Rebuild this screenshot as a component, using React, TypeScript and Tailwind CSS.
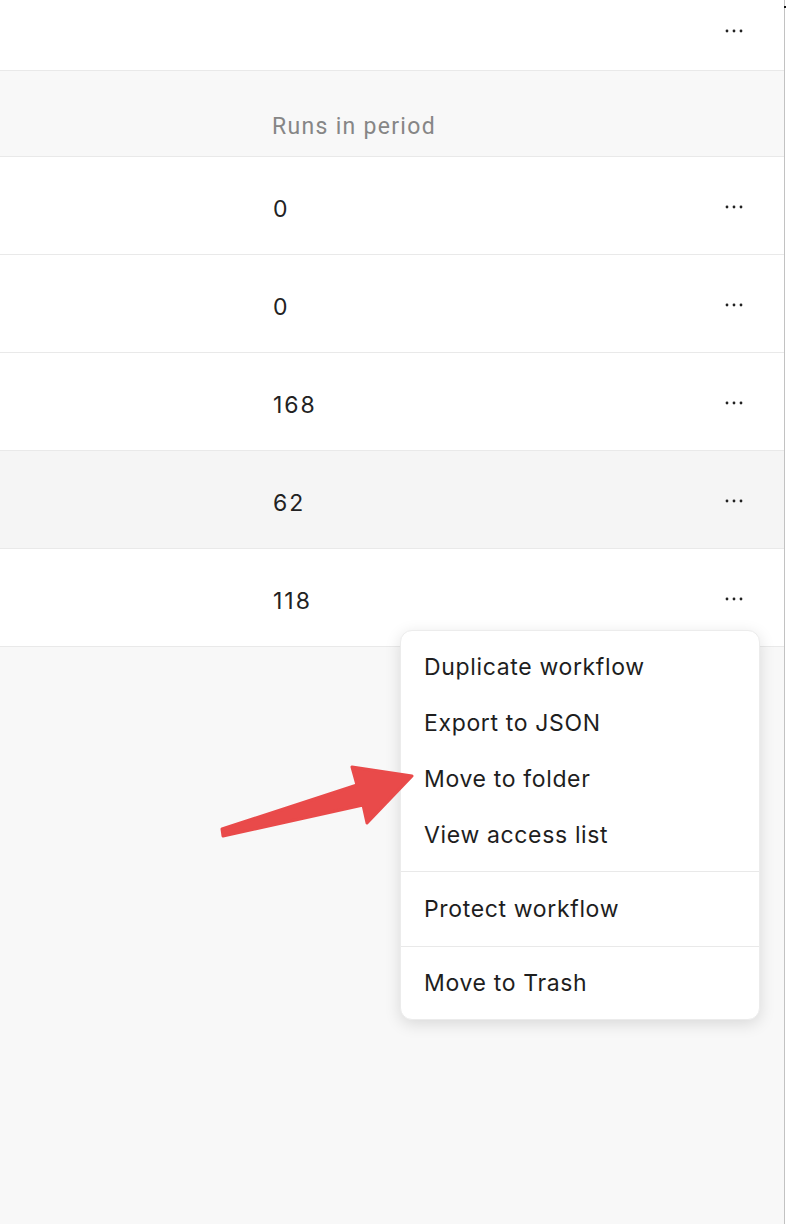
import React from "react";

const rows = [
  { runs: "0", hover: false },
  { runs: "0", hover: false },
  { runs: "168", hover: false },
  { runs: "62", hover: true },
  { runs: "118", hover: false },
];

const menuGroups = [
  { items: ["Duplicate workflow", "Export to JSON", "Move to folder", "View access list"], pad: "py-2" },
  { items: ["Protect workflow"], pad: "py-[9px]" },
  { items: ["Move to Trash"], pad: "py-2" },
];

function Dots() {
  return (
    <svg width="20" height="4" viewBox="0 0 20 4" className="block">
      <circle cx="3" cy="2" r="1.4" fill="#222" />
      <circle cx="10" cy="2" r="1.4" fill="#222" />
      <circle cx="17" cy="2" r="1.4" fill="#222" />
    </svg>
  );
}

export default function App() {
  return (
    <div className="relative flex w-[786px] h-[1224px] bg-white overflow-hidden">
      <div className="w-[784px] h-full bg-[#f8f8f8] flex flex-col">
        <div className="h-[71px] bg-white border-b border-[#e9e9e9] flex items-center justify-end pr-[40px] pb-[9px]">
          <Dots />
        </div>
        <div className="h-[86px] border-b border-[#e9e9e9] pl-[272px] pt-[41px]">
          <span className="text-[23px] leading-[30px] tracking-[1.3px] text-[#868686]" style={{ fontFamily: "Roboto, sans-serif" }}>
            Runs in period
          </span>
        </div>
        {rows.map((r, i) => (
          <div
            key={i}
            className={`h-[98px] border-b border-[#e9e9e9] flex items-center pl-[273px] pr-[40px] ${r.hover ? "bg-[#f5f5f5]" : "bg-white"}`}
          >
            <span className="flex-1 pt-[7px] text-[23px] tracking-[2px] text-[#222]" style={{ fontFamily: "Inter, sans-serif" }}>
              {r.runs}
            </span>
            <span className="pt-[3px]">
              <Dots />
            </span>
          </div>
        ))}
      </div>
      <div className="w-[1px] h-full bg-[#c2c2c2]" />
      <div className="w-[1px] h-full bg-white" />
      <div className="absolute left-[784px] top-[6px] w-[2px] h-[2px] bg-[#111]" />

      <div
        className="absolute left-[400px] top-[630px] w-[360px] bg-white rounded-[12px] border border-[#ececec] shadow-[0_4px_16px_rgba(0,0,0,0.13)] divide-y divide-[#e9e9e9]"
        style={{ fontFamily: "Inter, sans-serif" }}
      >
        {menuGroups.map((g, gi) => (
          <div key={gi} className={g.pad}>
            {g.items.map((t) => (
              <div key={t} className="h-[56px] flex items-center pl-[23px] text-[23px] tracking-[0.65px] text-[#1e1e1e]">
                {t}
              </div>
            ))}
          </div>
        ))}
      </div>

      <svg className="absolute left-0 top-0 pointer-events-none" width="786" height="1224" viewBox="0 0 786 1224">
        <path
          d="M222 829 L357 785 L352 767 L412 776 L367 823 L363 805 L223 836 Z"
          fill="#e94a4a"
          stroke="#e94a4a"
          strokeWidth="3"
          strokeLinejoin="round"
        />
      </svg>
    </div>
  );
}
